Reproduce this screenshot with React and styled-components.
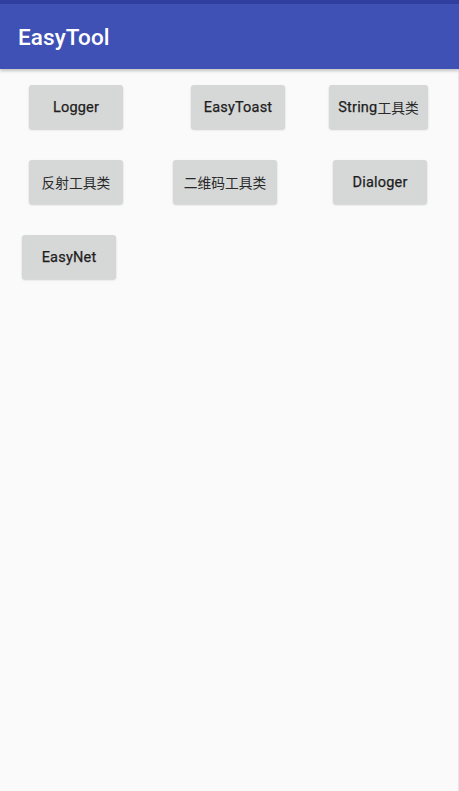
import React from "react";
import styled, { createGlobalStyle } from "styled-components";

const Global = createGlobalStyle`
  html, body { margin: 0; padding: 0; background: #fafafa; }
  body { font-family: Roboto, "Noto Sans CJK SC", sans-serif; }
`;

const Screen = styled.div`
  width: 459px;
  height: 791px;
  display: flex;
  flex-direction: column;
  background: #fafafa;
  overflow: hidden;
`;

const StatusStrip = styled.div`
  height: 4px;
  background: #303f9f;
  flex: none;
`;

const AppBar = styled.header`
  height: 65px;
  flex: none;
  background: #3f51b5;
  display: flex;
  align-items: center;
  padding-left: 18px;
  box-shadow: 0 2px 3px rgba(0, 0, 0, 0.22);
  position: relative;
  z-index: 1;
`;

const Title = styled.h1`
  margin: 0;
  color: #fff;
  font-family: Roboto, sans-serif;
  font-weight: 500;
  font-size: 22.5px;
  letter-spacing: 0.1px;
`;

const Content = styled.main`
  flex: 1;
  display: flex;
  flex-direction: column;
  gap: 31px;
  padding-top: 16px;
  border-right: 1px solid #e4e4e4;
`;

const Row = styled.div`
  display: flex;
  align-items: center;
`;

const Button = styled.button`
  margin-left: ${(p) => p.$left}px;
  height: 44px;
  min-width: ${(p) => p.$w || 94}px;
  padding: 0 6px;
  border: none;
  border-radius: 3px;
  background: #d6d7d7;
  box-shadow: 0 1px 2px rgba(0, 0, 0, 0.18);
  color: #1e1e1e;
  font-family: Roboto, "Noto Sans CJK SC", sans-serif;
  font-weight: 400;
  font-size: 14.5px;
  letter-spacing: 0.2px;
  -webkit-text-stroke: 0.25px #1e1e1e;
  display: flex;
  align-items: center;
  justify-content: center;
  white-space: nowrap;
`;

const Cjk = styled.span`
  font-weight: 400;
  font-family: "Noto Sans CJK SC", sans-serif;
  font-size: 13.75px;
  color: #2a2a2a;
  -webkit-text-stroke: 0;
  letter-spacing: 0;
`;

export default function App() {
  return (
    <>
      <Global />
      <Screen>
        <StatusStrip />
        <AppBar>
          <Title>EasyTool</Title>
        </AppBar>
        <Content>
          <Row>
            <Button $left={29}>Logger</Button>
            <Button $left={68}>EasyToast</Button>
            <Button $left={44} $w={99}>
              String<Cjk>工具类</Cjk>
            </Button>
          </Row>
          <Row>
            <Button $left={29}>
              <Cjk>反射工具类</Cjk>
            </Button>
            <Button $left={50} $w={104}>
              <Cjk>二维码工具类</Cjk>
            </Button>
            <Button $left={56}>Dialoger</Button>
          </Row>
          <Row>
            <Button $left={22}>EasyNet</Button>
          </Row>
        </Content>
      </Screen>
    </>
  );
}
